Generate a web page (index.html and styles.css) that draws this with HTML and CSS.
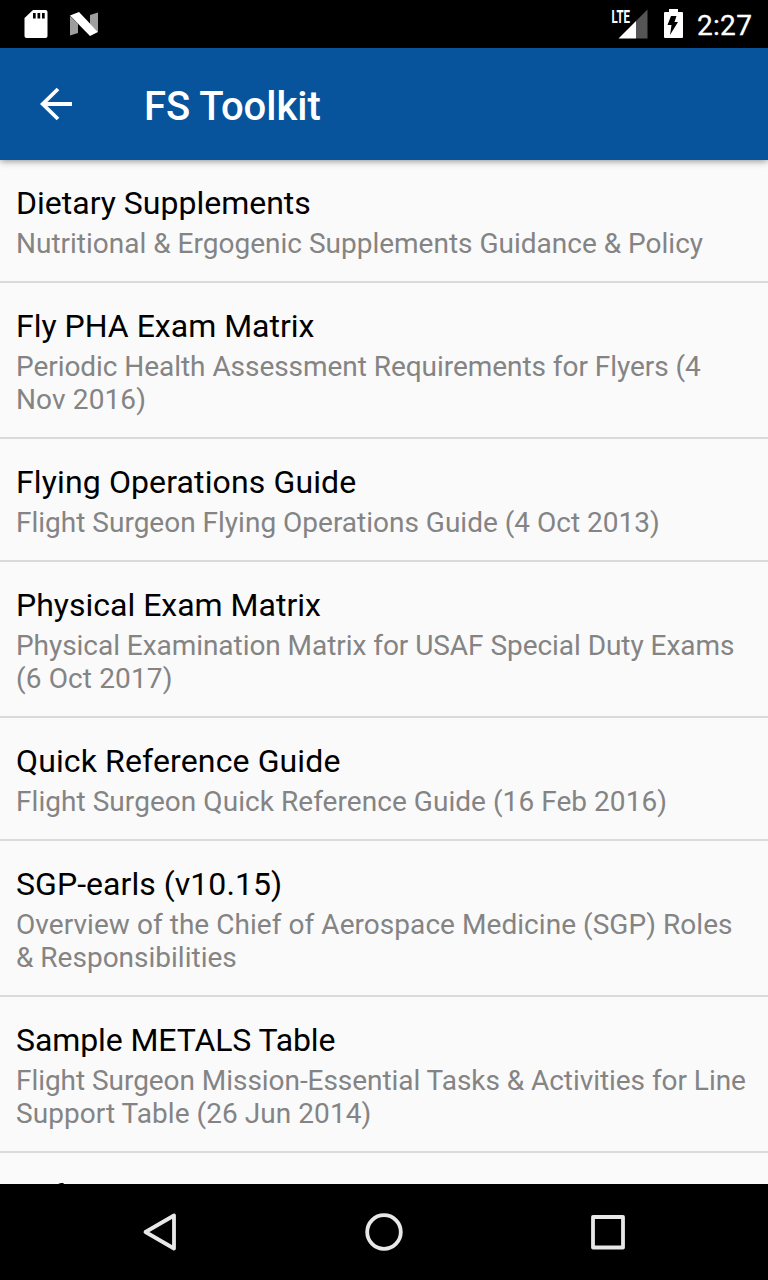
FILE: index.html
```html
<!DOCTYPE html>
<html lang="en">
<head>
<meta charset="utf-8">
<title>FS Toolkit</title>
<link rel="stylesheet" href="styles.css">
</head>
<body>
<div class="screen">
  <header class="status">
    <svg class="status-left" width="110" height="48" viewBox="0 0 110 48">
      <path fill="#fff" d="M33 10h12.500a2 2 0 0 1 2 2v24a2 2 0 0 1-2 2h-19a2 2 0 0 1-2-2V18z"/>
      <path fill="#000" d="M33 13h2.700v5.500h-2.700zM37.500 13h2.700v5.500h-2.700zM42 13h2.700v5.500h-2.700z"/>
      <path fill="#9e9e9e" d="M70 16l8 8v9l-8 2.500zM98 12.500V32l-8-8v-9z"/>
      <path fill="#fff" d="M70 15.500l9-3.500 19 20-8 4z"/>
    </svg>
    <div class="status-right">
      <svg width="80" height="48" viewBox="610 0 80 48">
        <path fill="#555" d="M636 21l11.500-11.500V38.500H636z"/>
        <path fill="#fff" d="M618.500 38.500L636 21v17.500z"/>
        <text class="lte" x="611.500" y="22.700" textLength="18.500" lengthAdjust="spacingAndGlyphs">LTE</text>
        <path fill="#fff" d="M669 9h9v3h4a1 1 0 0 1 1 1v24a1 1 0 0 1-1 1h-17a1 1 0 0 1-1-1V13a1 1 0 0 1 1-1h4z"/>
        <path fill="#000" d="M671 16h5.500l-2 6h3.500l-8 13 1.500-10h-4z"/>
      </svg>
      <span class="clock">2:27</span>
    </div>
  </header>
  <div class="appbar">
    <svg class="back" width="34" height="34" viewBox="39 87 34 34"><path fill="none" stroke="#fff" stroke-width="3.800" d="M72 104H43M58 89L42.700 104l15.300 15"/></svg>
    <h1 class="heading">FS Toolkit</h1>
  </div>
  <main class="list">
    <section class="item"><h2 class="title">Dietary Supplements</h2><p class="detail">Nutritional &amp; Ergogenic Supplements Guidance &amp; Policy</p></section>
    <section class="item"><h2 class="title">Fly PHA Exam Matrix</h2><p class="detail"><span class="snug">Periodic Health Assessment Requirements for Flyers (4</span><br><span class="loose">Nov 2016)</span></p></section>
    <section class="item"><h2 class="title loose">Flying Operations Guide</h2><p class="detail">Flight Surgeon Flying Operations Guide (4 Oct 2013)</p></section>
    <section class="item"><h2 class="title">Physical Exam Matrix</h2><p class="detail"><span class="snug">Physical Examination Matrix for USAF Special Duty Exams</span><br><span class="loose">(6 Oct 2017)</span></p></section>
    <section class="item"><h2 class="title loose">Quick Reference Guide</h2><p class="detail relaxed">Flight Surgeon Quick Reference Guide (16 Feb 2016)</p></section>
    <section class="item"><h2 class="title relaxed">SGP-earls (v10.15)</h2><p class="detail"><span class="relaxed">Overview of the Chief of Aerospace Medicine (SGP) Roles</span><br>&amp; Responsibilities</p></section>
    <section class="item"><h2 class="title tight">Sample METALS Table</h2><p class="detail"><span class="snug">Flight Surgeon Mission-Essential Tasks &amp; Activities for Line</span><br><span class="relaxed">Support Table (26 Jun 2014)</span></p></section>
    <section class="item"><h2 class="title">Safety</h2></section>
  </main>
  <nav class="navbar">
    <svg width="768" height="96" viewBox="0 1184 768 96" fill="none" stroke="#e8e8e8" stroke-width="3.800" stroke-linejoin="round">
      <path d="M145.500 1232L174 1215.500V1248.500z"/>
      <circle cx="384" cy="1232" r="16.800"/>
      <rect x="593" y="1217" width="30" height="30.500"/>
    </svg>
  </nav>
</div>
</body>
</html>
```
FILE: styles.css
```css
body { margin: 0; background: #fafafa; font-family: Roboto, sans-serif; }
.screen { display: flex; flex-direction: column; height: 1280px; width: 768px; overflow: hidden; }
.status { display: flex; justify-content: space-between; flex: 0 0 48px; height: 48px; background: #000; color: #fff; }
.status-left { display: block; }
.status-right { display: flex; width: 158px; height: 48px; }
.clock { box-sizing: border-box; height: 48px; padding-top: 3px; margin-left: 7px; font-size: 28px; letter-spacing: .3px; line-height: 45px; white-space: nowrap; -webkit-text-stroke: .3px #fff; }
.lte { fill: #fff; font: 700 17.5px Roboto, sans-serif; }
.appbar { display: flex; align-items: center; flex: 0 0 112px; box-sizing: border-box; padding-left: 39px; background: #07549d; color: #fff; box-shadow: 0 1px 7px rgba(0, 0, 0, .45); z-index: 1; }
.heading { margin: 6px 0 0 71px; font-size: 40px; line-height: 48px; font-weight: 500; }
.list { flex: 1; min-height: 0; overflow: hidden; }
.item { padding: 24px 0 21px 16px; border-bottom: 2px solid #dadada; white-space: nowrap; }
.title { margin: 0 0 5px; font-size: 32px; font-weight: 400; line-height: 38px; color: #000; }
.detail { margin: 0; font-size: 28px; line-height: 33px; color: #848484; }
.loose { letter-spacing: .13px; }
.relaxed { letter-spacing: .05px; }
.snug { letter-spacing: -.05px; }
.tight { letter-spacing: -.1px; }
.navbar { flex: 0 0 96px; background: #000; }
.navbar svg { display: block; }
```
